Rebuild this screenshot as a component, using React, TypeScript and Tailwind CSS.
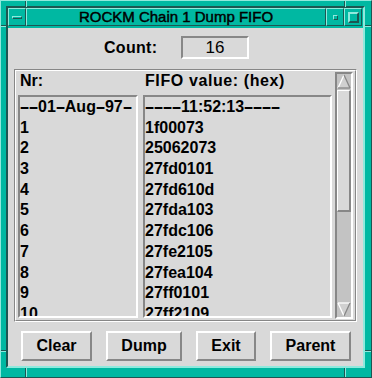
import React from "react";

const nr = ["--01-Aug-97-", "1", "2", "3", "4", "5", "6", "7", "8", "9", "10"];
const fifo = [
  "----11:52:13----",
  "1f00073",
  "25062073",
  "27fd0101",
  "27fd610d",
  "27fda103",
  "27fdc106",
  "27fe2105",
  "27fea104",
  "27ff0101",
  "27ff2109",
];

function Dashed({ text }: { text: string }) {
  const parts = text.split(/(-)/).filter((p) => p !== "");
  return (
    <>
      {parts.map((p, i) =>
        p === "-" ? (
          <span key={i} className="inline-block w-[9px] text-center scale-x-[1.9]">
            -
          </span>
        ) : (
          <span key={i}>{p}</span>
        )
      )}
    </>
  );
}

function List({ items, width }: { items: string[]; width: string }) {
  return (
    <div
      className={`${width} h-[223px] overflow-hidden bg-[#d9d9d9] border-2 border-t-[#878787] border-l-[#878787] border-b-white border-r-white`}
    >
      {items.map((t, i) => (
        <div key={i} className="leading-[20.7px] h-[20.7px] whitespace-nowrap text-[16px] font-bold text-black">
          <Dashed text={t} />
        </div>
      ))}
    </div>
  );
}

function Btn({ label, w }: { label: string; w: string }) {
  return (
    <div
      className={`${w} h-[30px] flex items-center justify-center bg-[#d9d9d9] border-2 border-t-white border-l-white border-b-[#878787] border-r-[#878787] text-[16px] font-bold text-black`}
    >
      {label}
    </div>
  );
}

export default function App() {
  return (
    <div className="relative w-[372px] h-[378px] bg-[#00b8a2] border border-t-[#8fe9dd] border-l-[#8fe9dd] border-r-[#1d5652] border-b-[#1d5652] pt-[5px] pl-[5px] pr-[6px] font-['Liberation_Sans',Arial,sans-serif]">
      {/* frame notches */}
      <div className="absolute left-[24px] top-0 w-[1px] h-[6px] bg-[#1d5652]" />
      <div className="absolute left-[25px] top-0 w-[1px] h-[6px] bg-[#8fe9dd]" />
      <div className="absolute left-0 top-[24px] w-[5px] h-[1px] bg-[#1d5652]" />
      <div className="absolute left-0 top-[25px] w-[5px] h-[1px] bg-[#8fe9dd]" />
      <div className="absolute left-[343px] top-0 w-[1px] h-[6px] bg-[#1d5652]" />
      <div className="absolute left-[344px] top-0 w-[1px] h-[6px] bg-[#8fe9dd]" />
      <div className="absolute right-0 top-[24px] w-[6px] h-[1px] bg-[#1d5652]" />
      <div className="absolute right-0 top-[25px] w-[6px] h-[1px] bg-[#8fe9dd]" />
      <div className="absolute left-[24px] bottom-0 w-[1px] h-[9px] bg-[#1d5652]" />
      <div className="absolute left-[25px] bottom-0 w-[1px] h-[9px] bg-[#8fe9dd]" />
      <div className="absolute left-[343px] bottom-0 w-[1px] h-[9px] bg-[#1d5652]" />
      <div className="absolute left-[344px] bottom-0 w-[1px] h-[9px] bg-[#8fe9dd]" />
      <div className="absolute left-0 top-[349px] w-[5px] h-[1px] bg-[#1d5652]" />
      <div className="absolute left-0 top-[350px] w-[5px] h-[1px] bg-[#8fe9dd]" />
      <div className="absolute right-0 top-[349px] w-[6px] h-[1px] bg-[#1d5652]" />
      <div className="absolute right-0 top-[350px] w-[6px] h-[1px] bg-[#8fe9dd]" />

      <div className="w-[359px] h-[362px] flex flex-col border-2 border-t-[#1d5652] border-l-[#1d5652] border-b-[#8fe9dd] border-r-[#8fe9dd] bg-[#00b8a2]">
        {/* title bar */}
        <div className="h-[20px] flex items-start">
          <div className="w-[18px] h-[18px] flex items-center justify-center border border-t-[#8fe9dd] border-l-[#8fe9dd] border-b-[#1d5652] border-r-[#1d5652]">
            <div className="w-[10px] h-[3px] mt-[1px] bg-[#00b8a2] border border-t-[#8fe9dd] border-l-[#8fe9dd] border-b-[#1d5652] border-r-[#1d5652]" />
          </div>
          <div className="w-[300px] h-[18px] flex items-center justify-center border border-t-[#8fe9dd] border-l-[#8fe9dd] border-b-[#1d5652] border-r-[#1d5652] text-[15px] leading-[16px] text-black whitespace-nowrap [-webkit-text-stroke:0.45px_#000]">
            ROCKM Chain 1 Dump FIFO
          </div>
          <div className="w-[18px] h-[18px] flex items-center justify-center border border-t-[#8fe9dd] border-l-[#8fe9dd] border-b-[#1d5652] border-r-[#1d5652]">
            <div className="w-[5px] h-[5px] bg-[#00b8a2] border border-t-[#8fe9dd] border-l-[#8fe9dd] border-b-[#1d5652] border-r-[#1d5652]" />
          </div>
          <div className="w-[18px] h-[18px] flex items-center justify-center border border-t-[#8fe9dd] border-l-[#8fe9dd] border-b-[#1d5652] border-r-[#1d5652]">
            <div className="w-[11px] h-[11px] bg-[#00b8a2] border-2 border-t-[#8fe9dd] border-l-[#8fe9dd] border-b-[#1d5652] border-r-[#1d5652]" />
          </div>
        </div>

        {/* client */}
        <div className="flex-1 bg-[#d9d9d9] flex flex-col pt-[8px]">
          <div className="flex items-center h-[23px] pl-[96px]">
            <div className="w-[77px] text-[16px] font-bold text-black leading-[20px] tracking-[0.3px]">Count:</div>
            <div className="w-[68px] h-[23px] flex items-center justify-center border-2 border-t-[#878787] border-l-[#878787] border-b-white border-r-white text-[17px] text-black bg-[#d9d9d9]">
              16
            </div>
          </div>

          {/* group frame */}
          <div className="ml-[6px] mt-[10px] w-[343px] h-[253px] border border-t-[#878787] border-l-[#878787] border-b-white border-r-white">
            <div className="w-full h-full flex border border-t-white border-l-white border-b-[#878787] border-r-[#878787]">
              <div className="w-[319px] flex flex-col">
                <div className="h-[24px] flex text-[16px] font-bold leading-[20px] text-black">
                  <div className="w-[127px] pl-[4px]">Nr:</div>
                  <div className="pl-[2px] tracking-[0.6px] whitespace-nowrap">FIFO value: (hex)</div>
                </div>
                <div className="flex pl-[2px] gap-[5px]">
                  <List items={nr} width="w-[120px]" />
                  <List items={fifo} width="w-[189px]" />
                </div>
              </div>
              {/* scrollbar */}
              <div className="mt-[1px] w-[18px] h-[247px] bg-[#c3c3c3] border-2 border-t-[#878787] border-l-[#878787] border-b-white border-r-white flex flex-col">
                <svg width="14" height="15" viewBox="0 0 14 15" className="block">
                  <polygon points="7,1 1,14 13,14" fill="#d0d0d0" />
                  <line x1="1" y1="14" x2="7" y2="1" stroke="#ffffff" strokeWidth="1.3" />
                  <line x1="7" y1="1" x2="13" y2="14" stroke="#878787" strokeWidth="1.3" />
                  <line x1="1" y1="14" x2="13" y2="14" stroke="#878787" strokeWidth="1.3" />
                </svg>
                <div className="mt-[1px] h-[122px] bg-[#d9d9d9] border-t border-l border-t-white border-l-white border-b-2 border-r-2 border-b-[#878787] border-r-[#878787]" />
                <div className="flex-1" />
                <svg width="14" height="15" viewBox="0 0 14 15" className="block">
                  <polygon points="1,1 13,1 7,14" fill="#d0d0d0" />
                  <line x1="1" y1="1" x2="13" y2="1" stroke="#ffffff" strokeWidth="1.3" />
                  <line x1="1" y1="1" x2="7" y2="14" stroke="#ffffff" strokeWidth="1.3" />
                  <line x1="13" y1="1" x2="7" y2="14" stroke="#878787" strokeWidth="1.3" />
                </svg>
              </div>
            </div>
          </div>

          {/* buttons */}
          <div className="mt-[9px] pl-[13px] flex gap-[14px]">
            <Btn label="Clear" w="w-[71px]" />
            <Btn label="Dump" w="w-[76px]" />
            <Btn label="Exit" w="w-[60px]" />
            <Btn label="Parent" w="w-[81px]" />
          </div>
        </div>
      </div>
    </div>
  );
}
